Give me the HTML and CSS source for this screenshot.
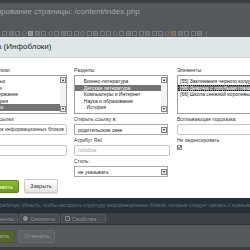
FILE: index.html
```html
<!DOCTYPE html>
<html lang="ru">
<head>
<meta charset="utf-8">
<title>Ссылка (Инфоблоки)</title>
<link rel="stylesheet" href="styles.css">
</head>
<body>
<div class="page-top">
  <div class="stripe"></div>
  <div class="page-head"><span class="page-title">Редактирование страницы: /content/index.php</span></div>
  <div class="editor-toolbar">
    <span class="ic"></span><span class="ic sq"></span><span class="ic"></span><span class="ic dot"></span>
    <span class="ic hl"></span><span class="ic sq"></span><span class="ic"></span><span class="ic dot"></span>
    <span class="ic"></span><span class="ic sq"></span><span class="ic"></span><span class="ic"></span>
    <span class="ic dot"></span><span class="ic"></span><span class="ic sq"></span><span class="ic"></span>
    <span class="ic"></span><span class="ic dot"></span><span class="ic"></span><span class="ic sq"></span>
    <span class="ic"></span><span class="ic"></span><span class="ic sq"></span><span class="ic"></span>
    <span class="ic"></span><span class="ic dot"></span><span class="ic brown"></span><span class="ic sq"></span>
    <span class="ic"></span><span class="ic"></span><span class="ic sq"></span><span class="sep"></span>
  </div>
</div>

<div class="dialog">
  <div class="dialog-title">Ссылка (Инфоблоки)</div>
  <div class="dialog-body">
    <div class="columns">
      <div class="col">
        <div class="group">
          <div class="lbl">Инфоблоки:</div>
          <div class="listbox">
            <div class="list-items">
              <div class="item">. Статьи</div>
              <div class="item">. Книги</div>
              <div class="item">. Содержание</div>
              <div class="item">. Галерея</div>
              <div class="item sel">. Видео</div>
            </div>
            <div class="scroll"><span class="sb-btn"><span class="tri-up"></span></span><span class="sb-btn"><span class="tri-down"></span></span></div>
          </div>
        </div>
        <div class="group">
          <div class="lbl">Текст ссылки:</div>
          <div class="input">Список информационных блоков</div>
        </div>
        <div class="group">
          <div class="lbl">Адрес:</div>
          <div class="input"></div>
        </div>
      </div>

      <div class="col">
        <div class="group">
          <div class="lbl">Разделы:</div>
          <div class="listbox narrow">
            <div class="list-items">
              <div class="item lvl">. Бизнес-литература</div>
              <div class="item lvl sel">. Детская литература</div>
              <div class="item lvl">. Компьютеры и Интернет</div>
              <div class="item lvl">. Наука и образование</div>
              <div class="item lvl">. . История</div>
            </div>
            <div class="scroll"><span class="sb-btn"><span class="tri-up"></span></span><span class="sb-btn"><span class="tri-down"></span></span></div>
          </div>
        </div>
        <div class="group">
          <div class="lbl">Открыть ссылку в:</div>
          <div class="select narrow"><span class="select-text">родительском окне</span><span class="select-btn"><span class="tri-down"></span></span></div>
        </div>
        <div class="group">
          <div class="lbl">Атрибут Rel:</div>
          <div class="input placeholder">nofollow</div>
        </div>
        <div class="group">
          <div class="lbl">Стиль:</div>
          <div class="select narrow"><span class="select-text">не указывать</span><span class="select-btn"><span class="tri-down"></span></span></div>
        </div>
      </div>

      <div class="col">
        <div class="group">
          <div class="lbl">Элементы:</div>
          <div class="listbox">
            <div class="list-items">
              <div class="item">[55] Заклинания черного колдуна</div>
              <div class="item sel focus">[56] Девочка с голубыми глазами</div>
              <div class="item">[66] Школа снежной королевы</div>
            </div>
          </div>
        </div>
        <div class="group">
          <div class="lbl">Всплывающая подсказка:</div>
          <div class="input"></div>
        </div>
        <div class="group">
          <div class="lbl">Не индексировать</div>
          <span class="checkbox"><svg viewBox="0 0 5 5" width="5" height="5"><path d="M1 2.4 L2 3.5 L4 1.2" fill="none" stroke="#111" stroke-width="0.9"/></svg></span>
        </div>
      </div>
    </div>
    <div class="dialog-buttons">
      <span class="btn green">Вставить</span>
      <span class="btn">Закрыть</span>
    </div>
  </div>
</div>

<div class="page-bottom">
  <div class="hint">Перетащите компонент в рабочую область, чтобы настроить структуру информационных блоков, которые следует связать с нужными объектами</div>
  <div class="admin-toolbar">
    <span class="tb-btn">Компоненты</span>
    <span class="tb-btn"><span class="tb-ic round"></span>Сниппеты</span>
    <span class="tb-btn wide"><span class="tb-ic gear"></span>Свойства</span>
  </div>
  <div class="form-buttons">
    <span class="fbtn green">Сохранить</span>
    <span class="fbtn">Отменить</span>
  </div>
  <div class="stripe"></div>
</div>
</body>
</html>
```

FILE: styles.css
```css
html, body {
  margin: 0;
  padding: 0;
  width: 250px;
  height: 250px;
  overflow: hidden;
}
body {
  background: #55595d;
  font-family: "Liberation Sans", Arial, sans-serif;
}
.stripe {
  height: 3px;
  background: #3a3e42;
}
.page-head {
  height: 23px;
  padding-top: 4px;
  white-space: nowrap;
}
.page-title {
  display: block;
  margin-left: -29px;
  font-size: 8px;
  line-height: 10px;
  color: #a2a6aa;
}
.editor-toolbar {
  height: 7px;
  display: flex;
  align-items: center;
  gap: 1.5px;
  padding-left: 2px;
}
.ic {
  width: 3px;
  height: 3px;
  border: 1px solid #787c80;
  flex: none;
}
.ic.sq { background: #6d7175; }
.ic.dot { border-radius: 50%; }
.ic.hl { background: #8a8e92; border-color: #9a9ea2; }
.ic.brown { background: #7d6b4c; border-color: #8a7a5a; }
.sep {
  width: 1px;
  height: 6px;
  background: #6a6e72;
  margin-left: 2px;
}

.dialog {
  margin-left: -25px;
  width: 306px;
  background: #fff;
}
.dialog-title {
  height: 20px;
  line-height: 20px;
  background: #dee6e8;
  border-bottom: 1px solid #cbd4d7;
  padding-left: 0;
  text-indent: -2px;
  font-size: 8px;
  color: #1e1e1e;
  white-space: nowrap;
}
.dialog-body {
  padding: 9px 8px 5px;
}
.columns {
  display: grid;
  grid-template-columns: 84px 96px 96px;
  column-gap: 7px;
}
.group + .group { margin-top: 2px; }
.lbl {
  height: 6px;
  line-height: 6px;
  margin-bottom: 2px;
  font-size: 5px;
  color: #333;
  white-space: nowrap;
}
.listbox {
  height: 39px;
  box-sizing: border-box;
  border: 1px solid #9d9d9d;
  display: flex;
  background: #fff;
  overflow: hidden;
}
.narrow { width: 94px; }
.list-items {
  flex: 1;
  min-width: 0;
  padding-top: 2px;
}
.item {
  height: 6.5px;
  line-height: 6.5px;
  padding-left: 2px;
  font-size: 5px;
  color: #222;
  white-space: nowrap;
  box-sizing: border-box;
}
.item.lvl { padding-left: 6px; }
.item.sel {
  background: #747474;
  color: #fff;
}
.item.focus {
  outline: 1px dotted #1a1a1a;
  outline-offset: -1px;
}
.scroll {
  width: 6px;
  flex: none;
  display: flex;
  flex-direction: column;
  justify-content: space-between;
  padding: 1px 0;
  background: #f3f3f3;
}
.sb-btn {
  height: 6px;
  box-sizing: border-box;
  border: 1px solid #8a8a8a;
  background: #ececec;
  display: flex;
  align-items: center;
  justify-content: center;
}
.tri-up, .tri-down {
  width: 0;
  height: 0;
  border-left: 1.5px solid transparent;
  border-right: 1.5px solid transparent;
}
.tri-up { border-bottom: 2px solid #111; }
.tri-down { border-top: 2px solid #111; }

.input {
  height: 11px;
  box-sizing: border-box;
  border: 1px solid #c6c6c6;
  border-radius: 2px;
  padding-left: 3px;
  font-size: 5px;
  line-height: 9px;
  color: #333;
  white-space: nowrap;
  overflow: hidden;
  background: #fff;
}
.input.placeholder { color: #a8a8a8; }
.select {
  height: 11px;
  box-sizing: border-box;
  border: 1px solid #a9a9a9;
  display: flex;
  align-items: center;
  padding: 0 0 0 3px;
  font-size: 5px;
  color: #222;
  white-space: nowrap;
}
.select-text { flex: 1; }
.select-btn {
  width: 6px;
  height: 6px;
  box-sizing: border-box;
  border: 1px solid #7f7f7f;
  background: #efefef;
  display: flex;
  align-items: center;
  justify-content: center;
}
.checkbox {
  display: block;
  width: 5px;
  height: 5px;
  box-sizing: border-box;
  border: 1px solid #8a8a8a;
  margin-top: 2px;
  background: #fff;
  position: relative;
}
.checkbox svg {
  position: absolute;
  left: -1px;
  top: -1px;
}

.dialog-buttons {
  margin-top: 2px;
  display: flex;
  gap: 5px;
  height: 14px;
  align-items: center;
}
.btn {
  height: 14px;
  box-sizing: border-box;
  padding: 0 5px;
  border: 1px solid #c9c9c9;
  border-radius: 2px;
  background: linear-gradient(#ffffff, #e3e3e3);
  box-shadow: 0 1px 1px rgba(0,0,0,0.12);
  font-size: 5.5px;
  line-height: 12px;
  color: #333;
}
.btn.green {
  height: 13px;
  padding: 0 5.5px;
  border-color: #5e8a1b;
  background: linear-gradient(#8cbf2f, #6a9a1e);
  color: #f4fbe6;
}

.hint {
  height: 11px;
  padding-top: 4px;
  margin-left: -60px;
  background: #243039;
  font-size: 5px;
  line-height: 6px;
  color: #687480;
  white-space: nowrap;
}
.admin-toolbar {
  height: 11px;
  background: #3c4145;
  border-bottom: 1px solid #2c3135;
  display: flex;
  align-items: center;
  gap: 1.5px;
  margin-left: -22px;
}
.tb-btn {
  height: 9px;
  box-sizing: border-box;
  border: 1px solid #575c61;
  border-radius: 2px;
  background: #464b50;
  padding: 0 3px;
  display: flex;
  align-items: center;
  gap: 2px;
  font-size: 5.5px;
  color: #8c9297;
  white-space: nowrap;
}
.tb-btn.wide { padding-right: 9px; }
.tb-ic {
  width: 3px;
  height: 3px;
  border: 1px solid #8c9297;
}
.tb-ic.round { border-radius: 50%; background: #8c9297; }
.tb-ic.gear { border-radius: 1px; }
.form-buttons {
  height: 22px;
  display: flex;
  align-items: center;
  gap: 3px;
  margin-left: -24px;
}
.fbtn {
  height: 13px;
  box-sizing: border-box;
  border: 1px solid #666b70;
  border-radius: 2px;
  background: #5c6165;
  padding: 0 5px;
  font-size: 5.5px;
  line-height: 11px;
  color: #93989c;
}
.fbtn.green {
  background: #55652f;
  border-color: #4a5a26;
  color: #a9b48c;
}
```
